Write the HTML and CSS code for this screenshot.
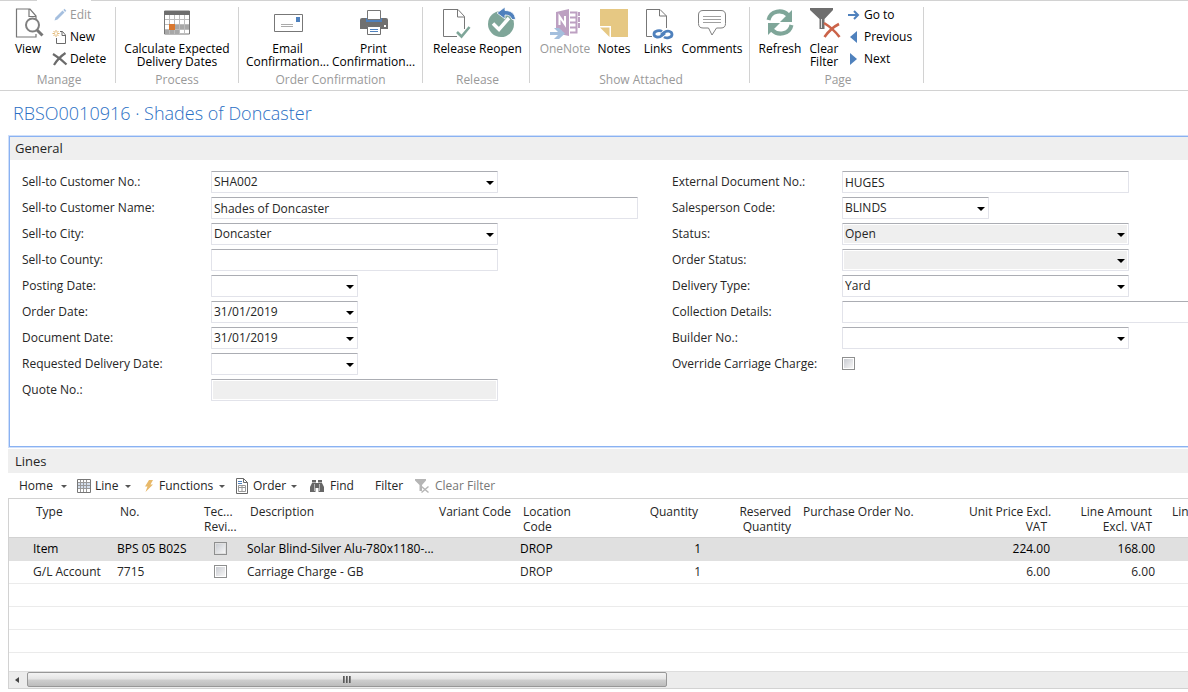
FILE: index.html
```html
<!DOCTYPE html>
<html lang="en">
<head>
    <meta charset="utf-8">
    <title>RBSO0010916 · Shades of Doncaster</title>
    <link rel="stylesheet" href="styles.css">
</head>
<body>
    <!-- Ribbon -->
    <header class="ribbon">
        <section class="group manage">
            <div class="group-items">
                <button class="big view">
                    <svg viewBox="0 0 32 32"><path d="M24 13V9l-6-7H4.500v28H24v-3M17 2v7.500h7" fill="none" stroke="#777" stroke-width="1.200"/><circle cx="20.500" cy="18" r="6.500" fill="#fff" stroke="#808080" stroke-width="2"/><path d="M25 23l5.500 5.500" stroke="#777" stroke-width="3"/></svg>
                    <span>View</span>
                </button>
                <div class="small-list">
                    <button class="small" disabled><svg viewBox="0 0 16 16"><path d="M2.500 13.500l1-3 7-7 2 2-7 7z" fill="#a5bfdf"/><path d="M11.300 3l1.200-1.200 1.800 1.900-1.200 1.200z" fill="#a5bfdf"/></svg>Edit</button>
                    <button class="small"><svg viewBox="0 0 16 16"><path d="M4.500 9v5.500h9V6l-3-3.500H8M10 2.500v4h3.500" fill="none" stroke="#6a6a6a"/><path d="M4 1v7M.5 4.500h7M1.500 2l5 5M6.500 2l-5 5" stroke="#e3b873"/><circle cx="4" cy="4.500" r="1.200" fill="#fff"/></svg>New</button>
                    <button class="small"><svg viewBox="0 0 16 16"><path d="M1 3c5 3 9 6 13.500 10.500M13.500 2C9 5 5 9 2 14" fill="none" stroke="#6b6b6b" stroke-width="2.200"/></svg>Delete</button>
                </div>
            </div>
            <h2>Manage</h2>
        </section>
        <section class="group process">
            <div class="group-items">
                <button class="big wide">
                    <svg viewBox="0 0 32 32"><path d="M3.500 4h25v23h-25z" fill="#fff" stroke="#777"/><path d="M3 4h26v4H3z" fill="#6e6e6e"/><path d="M14 17h14v5H14zM4 22h14v5H4z" fill="#a8a8a8"/><path d="M8.500 8v19M13.500 8v19M18.500 8v19M23.500 8v19" stroke="#bdbdbd"/><path d="M4 12.500h24M4 17.500h24M4 22.500h24" stroke="#bdbdbd"/><path d="M8 17h6v6H8z" fill="#d9772f"/></svg>
                    <span>Calculate Expected<br>Delivery Dates</span>
                </button>
            </div>
            <h2>Process</h2>
        </section>
        <section class="group order">
            <div class="group-items">
                <button class="big confirm">
                    <svg viewBox="0 0 32 32"><path d="M2.500 7.500h28v17h-28z" fill="#fff" stroke="#777"/><path d="M24 10h4v5h-4z" fill="#4f81bd"/><path d="M9 17.500h12M9 19.500h12" stroke="#aaa"/></svg>
                    <span>Email<br>Confirmation...</span>
                </button>
                <button class="big confirm">
                    <svg viewBox="0 0 32 32"><path d="M2 13q0-2 2-2h24q2 0 2 2v9H2z" fill="#707070"/><path d="M8 11h16v4H8z" fill="#4f81bd"/><path d="M9.500 3.500h13v9h-13z" fill="#fff" stroke="#777"/><path d="M9.500 19.500h13v8h-13z" fill="#fff" stroke="#707070"/><path d="M12 22.500h8M12 24.500h8" stroke="#4f81bd"/><path d="M26 18h2v2h-2z" fill="#fff"/></svg>
                    <span>Print<br>Confirmation...</span>
                </button>
            </div>
            <h2>Order Confirmation</h2>
        </section>
        <section class="group release">
            <div class="group-items">
                <button class="big mid">
                    <svg viewBox="0 0 32 32"><path d="M25.500 22V9.500L19 2.500H4.500v27H18M18.500 2.500v7.500h7" fill="none" stroke="#777"/><path d="M18 25l4.500 4.500L30.500 20" fill="none" stroke="#7fa699" stroke-width="2.600"/></svg>
                    <span>Release</span>
                </button>
                <button class="big mid">
                    <svg viewBox="0 0 32 32"><circle cx="16" cy="17" r="13" fill="#7fa699"/><path d="M8 16.500l6 6L24 11" fill="none" stroke="#fff" stroke-width="3.500"/><path d="M12 6l8-6v3.500c6 0 10 3 10.500 9h-3.500c-1-3-3-4.500-7-4.500v4z" fill="#4f81bd" stroke="#fff" stroke-width=".8"/></svg>
                    <span>Reopen</span>
                </button>
            </div>
            <h2>Release</h2>
        </section>
        <section class="group attached">
            <div class="group-items">
                <button class="big onenote" disabled>
                    <svg viewBox="0 0 32 32"><path d="M7 5l13-3v27l-7-1.500V24l-6-2z" fill="#bda0c2"/><path d="M10.500 18V9.500l5.500 8V9" fill="none" stroke="#fff" stroke-width="2"/><path d="M21 5.500h6.500v20H21M21 10.500h6M21 15.500h6M21 20.500h6" fill="none" stroke="#bda0c2" stroke-width="2"/><path d="M29 5h2v4h-2zM29 10h2v5h-2zM29 16h2v5h-2z" fill="#bda0c2"/><path d="M1 25h8l-4-4h5l6 5.500-6 5.500H5l4-4H1z" fill="#a4bfdd"/></svg>
                    <span>OneNote</span>
                </button>
                <button class="big">
                    <svg viewBox="0 0 32 32"><path d="M2 2h28v28H13V19H2z" fill="#e6c883"/><path d="M2 20.500h9.500V30z" fill="#e6c883"/></svg>
                    <span>Notes</span>
                </button>
                <button class="big">
                    <svg viewBox="0 0 32 32"><path d="M24.500 21V9L18 2.500H4.500v27H10M17.500 2.500V9h7" fill="none" stroke="#777"/><path d="M20 24.500c-2-1.500-8-1-8 2.500s5 4 8 1.500l3-2.500" fill="none" stroke="#4f81bd" stroke-width="2.800"/><path d="M22 30c2 1.500 8 1 8-2.500s-5-4.500-8-2l-3 2.500" fill="none" stroke="#4f81bd" stroke-width="2.800"/></svg>
                    <span>Links</span>
                </button>
                <button class="big comments">
                    <svg viewBox="0 0 32 32"><path d="M7 3.500h18q4.500 0 4.500 4.500v8.500q0 4.500-4.500 4.500h-4.500l-4.500 7-3.500-7H7q-4.500 0-4.500-4.500V8q0-4.500 4.500-4.500z" fill="#fff" stroke="#808080"/><path d="M7 9.500h18M7 12.500h18M7 15.500h18" stroke="#a0a0a0"/></svg>
                    <span>Comments</span>
                </button>
            </div>
            <h2>Show Attached</h2>
        </section>
        <section class="group page">
            <div class="group-items">
                <button class="big">
                    <svg viewBox="0 0 32 32"><path d="M4.500 13C6.500 3.500 18 2 24 8" fill="none" stroke="#7fa699" stroke-width="4"/><path d="M28 3v12H16z" fill="#7fa699"/><path d="M27.500 18C25.500 27.500 14 29 8 23" fill="none" stroke="#7fa699" stroke-width="4"/><path d="M4 28V16h12z" fill="#7fa699"/></svg>
                    <span>Refresh</span>
                </button>
                <button class="big">
                    <svg viewBox="0 0 32 32"><path d="M2 1h23v2l-8.500 9v10h-5V12L2 3z" fill="#6e6e6e"/><path d="M13.500 12v9" stroke="#ddd"/><path d="M16 16c5 3 11 8 15.500 14M31 17c-6 3-11 8-14.500 13" fill="none" stroke="#cb6349" stroke-width="2.600"/></svg>
                    <span>Clear<br>Filter</span>
                </button>
                <div class="small-list">
                    <button class="small"><svg viewBox="0 0 16 16"><path d="M2 8h9M8 4l4 4-4 4" fill="none" stroke="#4f81bd" stroke-width="2"/></svg>Go to</button>
                    <button class="small"><svg viewBox="0 0 16 16"><path d="M11 2v12L4 8z" fill="#4f81bd"/></svg>Previous</button>
                    <button class="small"><svg viewBox="0 0 16 16"><path d="M4 2v12l7-6z" fill="#4f81bd"/></svg>Next</button>
                </div>
            </div>
            <h2>Page</h2>
        </section>
    </header>

    <main>
        <h1>RBSO0010916 · Shades of Doncaster</h1>

        <!-- General tab -->
        <section class="general">
            <h3>General</h3>
            <form class="fields">
                <div class="col-left">
                    <div class="row"><label for="custNo">Sell-to Customer No.:</label><span class="combo"><select id="custNo"><option>SHA002</option></select></span></div>
                    <div class="row"><label for="custName">Sell-to Customer Name:</label><input class="long" type="text" id="custName" value="Shades of Doncaster"></div>
                    <div class="row"><label for="city">Sell-to City:</label><span class="combo"><select id="city"><option>Doncaster</option></select></span></div>
                    <div class="row"><label for="county">Sell-to County:</label><input type="text" id="county"></div>
                    <div class="row"><label for="postDate">Posting Date:</label><span class="combo short"><select id="postDate"><option></option></select></span></div>
                    <div class="row"><label for="orderDate">Order Date:</label><span class="combo short"><select id="orderDate"><option>31/01/2019</option></select></span></div>
                    <div class="row"><label for="docDate">Document Date:</label><span class="combo short"><select id="docDate"><option>31/01/2019</option></select></span></div>
                    <div class="row"><label for="reqDate">Requested Delivery Date:</label><span class="combo short"><select id="reqDate"><option></option></select></span></div>
                    <div class="row"><label for="quote">Quote No.:</label><input type="text" id="quote" disabled></div>
                </div>
                <div class="col-right">
                    <div class="row"><label for="extDoc">External Document No.:</label><input type="text" id="extDoc" value="HUGES"></div>
                    <div class="row"><label for="sales">Salesperson Code:</label><span class="combo short"><select id="sales"><option>BLINDS</option></select></span></div>
                    <div class="row"><label for="status">Status:</label><span class="combo"><select id="status" disabled><option>Open</option></select></span></div>
                    <div class="row"><label for="orderStatus">Order Status:</label><span class="combo"><select id="orderStatus" disabled><option></option></select></span></div>
                    <div class="row"><label for="delType">Delivery Type:</label><span class="combo"><select id="delType"><option>Yard</option></select></span></div>
                    <div class="row"><label for="collection">Collection Details:</label><input class="long" type="text" id="collection"></div>
                    <div class="row"><label for="builder">Builder No.:</label><span class="combo"><select id="builder"><option></option></select></span></div>
                    <div class="row"><label for="carriage">Override Carriage Charge:</label><input type="checkbox" id="carriage"></div>
                </div>
            </form>
        </section>

        <!-- Lines tab -->
        <section class="lines">
            <h3>Lines</h3>
            <nav class="toolbar">
                <button class="menu home">Home</button>
                <button class="menu line"><svg viewBox="0 0 16 16"><path d="M1.500 1.500h13v13h-13z" fill="#fff" stroke="#777"/><path d="M2 5h12v6H2z" fill="#d3deec"/><path d="M4.500 2v12M7.500 2v12M10.500 2v12M2 4.500h12M2 7.500h12M2 10.500h12" stroke="#999"/></svg>Line</button>
                <button class="menu functions"><svg viewBox="0 0 16 16"><path d="M9 2h4L10.500 6.500H13L5.500 14l2-5.500H5z" fill="#e8b96a"/></svg>Functions</button>
                <button class="menu order-menu"><svg viewBox="0 0 16 16"><path d="M2.500.5h7l4 4v11h-11zM9.500.5v4h4" fill="#fff" stroke="#6a6a6a"/><path d="M4 3.500h4M4 5.500h4" stroke="#4f81bd"/><path d="M4.500 7.500h7v6h-7zM8 7v6M4.500 9.500h7" fill="none" stroke="#999"/></svg>Order</button>
                <button class="find"><svg viewBox="0 0 16 16"><path d="M3 2h4v3h2V2h4v3l2 4v5H9.500v-4h-3v4H1V9l2-4z" fill="#666"/><path d="M3 4.500h4M9 4.500h4M5.500 6v7M10.500 6v7" stroke="#ccc" stroke-width=".8"/></svg>Find</button>
                <button class="filter">Filter</button>
                <button class="clear" disabled><svg viewBox="0 0 16 16"><path d="M1 1h11v1.500L8 7v6H5.500V7L1 2.500z" fill="#b5b5b5"/><path d="M7.500 8.500l7 6M14.500 8.500l-7 6" stroke="#b5b5b5" stroke-width="1.500"/></svg>Clear Filter</button>
            </nav>
            <div class="grid">
                <table>
                    <colgroup>
                        <col class="c-sel"><col class="c-std"><col class="c-std"><col class="c-tec"><col class="c-desc"><col class="c-std"><col class="c-wide"><col class="c-qty"><col class="c-res"><col class="c-po"><col class="c-price"><col class="c-wide"><col class="c-std">
                    </colgroup>
                    <thead>
                        <tr>
                            <th></th><th>Type</th><th>No.</th><th>Tec...<br>Revi...</th><th>Description</th><th>Variant Code</th><th>Location<br>Code</th><th class="num">Quantity</th><th class="num">Reserved<br>Quantity</th><th>Purchase Order No.</th><th class="num">Unit Price Excl.<br>VAT</th><th class="num">Line Amount<br>Excl. VAT</th><th class="last">Line</th>
                        </tr>
                    </thead>
                    <tbody>
                        <tr class="selected">
                            <td></td><td>Item</td><td>BPS 05 B02S</td><td class="check"><input type="checkbox" aria-label="Technical review"></td><td>Solar Blind-Silver Alu-780x1180-...</td><td></td><td>DROP</td><td class="num">1</td><td></td><td></td><td class="num">224.00</td><td class="num">168.00</td><td></td>
                        </tr>
                        <tr>
                            <td></td><td>G/L Account</td><td>7715</td><td class="check"><input type="checkbox" aria-label="Technical review"></td><td>Carriage Charge - GB</td><td></td><td>DROP</td><td class="num">1</td><td></td><td></td><td class="num">6.00</td><td class="num">6.00</td><td></td>
                        </tr>
                        <tr><td colspan="13"></td></tr>
                        <tr><td colspan="13"></td></tr>
                        <tr><td colspan="13"></td></tr>
                    </tbody>
                </table>
                <div class="scrollbar">
                    <button aria-label="Scroll left"></button>
                    <div class="thumb"><i></i><i></i><i></i></div>
                </div>
            </div>
        </section>
    </main>
</body>
</html>
```
FILE: styles.css
```css
* {
    box-sizing: border-box;
    margin: 0;
    padding: 0;
}

body {
    background: #fff;
    color: #262626;
    font: 12px/16px "Open Sans", "Noto Sans", sans-serif;
    overflow: hidden;
}

button, input, select {
    font: inherit;
    color: inherit;
}

button {
    background: none;
    border: 0;
    white-space: nowrap;
}

/* Ribbon */
.ribbon {
    display: flex;
    height: 91px;
    padding-top: 7px;
    border-bottom: 1px solid #d2d2d2;
    /* top line is open under the active tab */
    background: linear-gradient(to right, #d2d2d2 37px, #fff 37px, #fff 91px, #d2d2d2 91px) top / 100% 1px no-repeat;
    color: #000;
}

.group {
    flex: none;
    height: 76px;
    border-right: 1px solid #d2d2d2;
}

.group-items {
    display: flex;
    justify-content: center;
    height: 65px;
}

.group h2 {
    font-size: 12px;
    font-weight: normal;
    line-height: 16px;
    text-align: center;
    color: #999;
}

.manage { width: 116px; }
.process { width: 123px; }
.order { width: 184px; }
.release { width: 107px; }
.attached { width: 220px; }
.page { width: 174px; }

.manage, .release, .attached, .page { padding-left: 3px; }

.big {
    display: flex;
    flex-direction: column;
    align-items: center;
    width: 44px;
    line-height: 13px;
}

.big svg {
    flex: none;
    width: 32px;
    height: 32px;
    margin-bottom: 3px;
    overflow: visible;
}

.view { width: 48px; }
.wide { width: 110px; }
.confirm { width: 86px; }
.mid { width: 46px; }
.onenote { width: 54px; }
.comments { width: 64px; }

button:disabled { color: #999; }

.small-list {
    display: flex;
    flex-direction: column;
    width: 62px;
    margin-top: -3px;
}

.page .small-list { width: 72px; }

.small {
    display: flex;
    align-items: center;
    gap: 2px;
    height: 22px;
}

.small svg {
    flex: none;
    width: 16px;
    height: 16px;
}

/* Page */
main { padding-left: 8px; }

h1 {
    padding: 10px 5px;
    font-size: 18px;
    line-height: 24px;
    font-weight: 300;
    color: #2a6fc4;
}

h3 {
    height: 23px;
    padding-left: 5px;
    font-size: 13px;
    line-height: 23px;
    font-weight: normal;
    background: #efefef;
}

.general {
    border: 1px solid #8ab2f2;
    border-right: 0;
    box-shadow: 0 0 0 1px #cfdffa;
    margin-left: 1px;
    margin-top: 1px;
    overflow: hidden;
}

.fields {
    display: flex;
    padding: 11px 0 41px 12px;
}

.col-left, .col-right { flex: none; }
.col-left { width: 650px; }
.col-left label { width: 189px; }
.col-right label { width: 170px; }

.row {
    display: flex;
    height: 26px;
}

.row label {
    flex: none;
    line-height: 22px;
}

input[type="text"], select {
    width: 287px;
    height: 22px;
    padding: 0 2px;
    border: 1px solid #e2e3ea;
    border-top-color: #abadb3;
    border-radius: 1px;
    background: #fff;
    appearance: none;
    outline: 0;
}

input[type="text"].long { width: 427px; }

input[type="text"]:disabled, select:disabled {
    background: #efefef;
    box-shadow: inset 0 0 0 1px #fff;
    color: inherit;
    opacity: 1;
}

.combo { position: relative; }
.combo.short select { width: 147px; }

.combo::after {
    content: "";
    position: absolute;
    right: 4px;
    top: 10px;
    border: 4px solid transparent;
    border-top-color: #000;
    border-bottom: 0;
    pointer-events: none;
}

input[type="checkbox"] {
    width: 13px;
    height: 13px;
    appearance: none;
    border: 1px solid #8e8f8f;
    background: linear-gradient(135deg, #c9ccd2, #f6f6f6) content-box #f4f4f4;
    padding: 1px;
}

.row input[type="checkbox"] { margin-top: 4px; }

/* Lines */
.lines { margin-top: 2px; }
.lines h3 {
    height: 24px;
    padding-left: 7px;
    line-height: 24px;
}

.toolbar {
    display: flex;
    height: 25px;
    padding: 1px 0 0 11px;
}

.toolbar button {
    display: flex;
    align-items: center;
    gap: 3px;
}

.toolbar svg {
    width: 16px;
    height: 16px;
}

.menu::after {
    content: "";
    margin-left: auto;
    border: 3px solid transparent;
    border-top-color: #555;
    border-bottom: 0;
}

.toolbar .home { width: 48px; margin-right: 9px; }
.toolbar .line { width: 55px; margin-right: 9px; }
.toolbar .functions { width: 85px; margin-right: 9px; }
.toolbar .order-menu { width: 63px; margin-right: 12px; }
.toolbar .find, .toolbar .clear { gap: 5px; }
.toolbar .find { width: 66px; }
.toolbar .filter { width: 39px; }
.toolbar button:disabled { color: #777; }

.grid {
    border: 1px solid #d2d2d2;
    border-right: 0;
    overflow: hidden;
}

table {
    width: 1233px;
    table-layout: fixed;
    border-collapse: collapse;
}

.c-sel { width: 21px; }
.c-std { width: 84px; }
.c-tec { width: 46px; }
.c-desc { width: 189px; }
.c-wide { width: 105px; }
.c-qty { width: 82px; }
.c-res { width: 93px; }
.c-po { width: 166px; }
.c-price { width: 90px; }

th {
    height: 38px;
    padding: 5px 6px 0;
    font-weight: normal;
    line-height: 15px;
    text-align: left;
    vertical-align: top;
    white-space: nowrap;
}

td {
    height: 23px;
    padding: 0 3px;
    line-height: 22px;
    white-space: nowrap;
    border-bottom: 1px solid #ebebeb;
}

th.num, td.num { text-align: right; }
th.last { padding-left: 14px; }
td.check { padding-left: 16px; }
td.check input { display: block; }

.selected td {
    background: #e0e0e0;
    border-top: 1px solid #d2d2d2;
    border-bottom-color: #e0e0e0;
    color: #000;
}

.scrollbar {
    display: flex;
    height: 17px;
    margin-top: 18px;
    background: #ececec;
    border-top: 1px solid #ddd;
}

.scrollbar button {
    width: 18px;
    padding-left: 6px;
}

.scrollbar button::before {
    content: "";
    display: block;
    width: 0;
    border: 3px solid transparent;
    border-right: 4px solid #444;
    border-left: 0;
}

.thumb {
    display: flex;
    justify-content: center;
    align-items: center;
    gap: 1px;
    width: 640px;
    height: 15px;
    border: 1px solid #979797;
    border-radius: 2px;
    background: linear-gradient(#f3f3f3, #e4e4e4 48%, #cfcfcf 52%, #bcbcbc);
}

.thumb i {
    width: 2px;
    height: 7px;
    background: linear-gradient(to right, #444, #999);
}
```
